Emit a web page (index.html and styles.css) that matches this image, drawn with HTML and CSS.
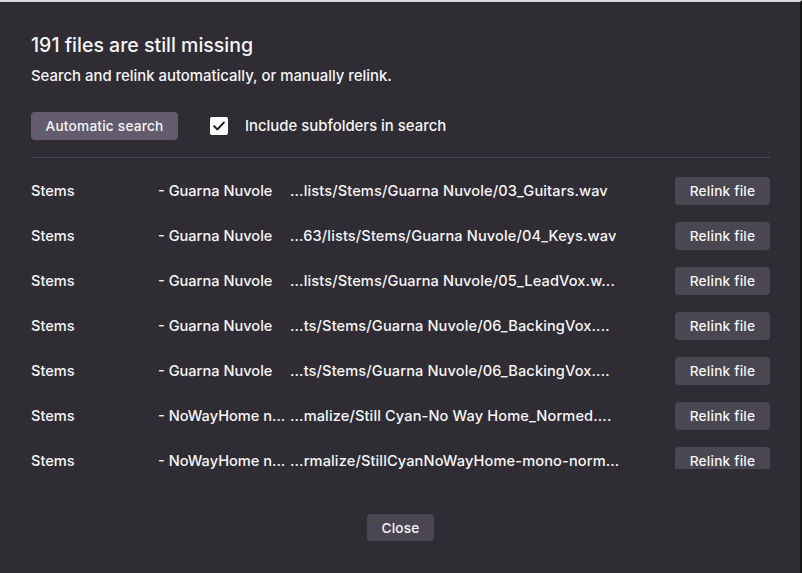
FILE: index.html
```html
<!DOCTYPE html>
<html lang="en">
<head>
<meta charset="utf-8">
<title>Missing files</title>
<link rel="stylesheet" href="styles.css">
</head>
<body>
<div class="dialog">
  <h1 class="title">191 files are still missing</h1>
  <p class="subtitle">Search and relink automatically, or manually relink.</p>
  <div class="controls">
    <button class="btn btn-primary">Automatic search</button>
    <label class="check">
      <span class="box"><svg width="14" height="14" viewBox="0 0 14 14"><path d="M2.2 7.3 L5.4 10.4 L11.8 3.6" fill="none" stroke="#1a1a1a" stroke-width="2" stroke-linecap="round" stroke-linejoin="round"/></svg></span>
      <span class="check-label">Include subfolders in search</span>
    </label>
  </div>
  <div class="divider"></div>
  <div class="list">
    <div class="row"><span class="c-folder">Stems</span><span class="c-name">- Guarna Nuvole</span><span class="c-path">...lists/Stems/Guarna Nuvole/03_Guitars.wav</span><button class="btn btn-relink">Relink file</button></div>
    <div class="row"><span class="c-folder">Stems</span><span class="c-name">- Guarna Nuvole</span><span class="c-path">...63/lists/Stems/Guarna Nuvole/04_Keys.wav</span><button class="btn btn-relink">Relink file</button></div>
    <div class="row"><span class="c-folder">Stems</span><span class="c-name">- Guarna Nuvole</span><span class="c-path">...lists/Stems/Guarna Nuvole/05_LeadVox.w...</span><button class="btn btn-relink">Relink file</button></div>
    <div class="row"><span class="c-folder">Stems</span><span class="c-name">- Guarna Nuvole</span><span class="c-path">...ts/Stems/Guarna Nuvole/06_BackingVox....</span><button class="btn btn-relink">Relink file</button></div>
    <div class="row"><span class="c-folder">Stems</span><span class="c-name">- Guarna Nuvole</span><span class="c-path">...ts/Stems/Guarna Nuvole/06_BackingVox....</span><button class="btn btn-relink">Relink file</button></div>
    <div class="row"><span class="c-folder">Stems</span><span class="c-name">- NoWayHome n...</span><span class="c-path">...malize/Still Cyan-No Way Home_Normed....</span><button class="btn btn-relink">Relink file</button></div>
    <div class="row"><span class="c-folder">Stems</span><span class="c-name">- NoWayHome n...</span><span class="c-path">...rmalize/StillCyanNoWayHome-mono-norm...</span><button class="btn btn-relink">Relink file</button></div>
  </div>
  <div class="footer">
    <button class="btn btn-close">Close</button>
  </div>
</div>
</body>
</html>
```
FILE: styles.css
```css
* { box-sizing: border-box; }
html, body {
  margin: 0;
  padding: 0;
  background: #2f2d33;
  height: 100%;
}
body {
  font-family: Inter, Roboto, "Liberation Sans", sans-serif;
  font-weight: 500;
  color: #f6f5f8;
}
.dialog {
  width: 802px;
  height: 573px;
  background: #2f2d33;
  border-top: 2px solid #d9d8dc;
  border-right: 2px solid #151417;
  padding: 30px 30px 0 31px;
  display: flex;
  flex-direction: column;
}
.title {
  margin: 0;
  font-size: 19.5px;
  font-weight: 500;
  line-height: 26px;
}
.subtitle {
  margin: 8px 0 0 0;
  font-size: 14.9px;
  line-height: 20px;
}
.controls {
  display: flex;
  align-items: center;
  margin-top: 26px;
  height: 28px;
}
.btn {
  font-family: Inter, Roboto, "Liberation Sans", sans-serif;
  font-weight: 500;
  border: none;
  color: #f6f5f8;
  border-radius: 4px;
  padding: 0;
  font-size: 13.7px;
  letter-spacing: 0.2px;
}
.btn-primary {
  background: #625c6e;
  width: 147px;
  height: 28px;
}
.check {
  display: flex;
  align-items: center;
  margin-left: 32px;
}
.box {
  width: 18px;
  height: 18px;
  background: #ffffff;
  border-radius: 2px;
  display: flex;
  align-items: center;
  justify-content: center;
}
.check-label {
  margin-left: 17px;
  font-size: 14.9px;
}
.divider {
  height: 1px;
  background: #4a4850;
  margin-top: 17px;
}
.list {
  margin-top: 10px;
  height: 301px;
  overflow: hidden;
}
.row {
  height: 45px;
  display: flex;
  align-items: center;
  font-size: 14.6px;
  line-height: 18px;
}
.c-folder { width: 127px; flex: none; }
.c-name { width: 132px; flex: none; white-space: nowrap; overflow: hidden; }
.c-path { width: 385px; flex: none; white-space: nowrap; overflow: hidden; letter-spacing: 0.12px; }
.btn-relink {
  background: #4a4753;
  width: 95px;
  height: 28px;
  flex: none;
}
.footer {
  display: flex;
  justify-content: center;
  margin-top: 45px;
}
.btn-close {
  background: #4a4753;
  width: 67px;
  height: 27px;
}
```
